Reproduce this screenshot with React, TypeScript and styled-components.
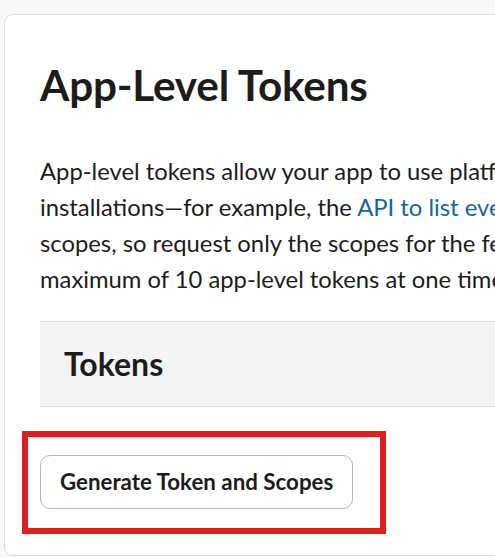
import React from "react";
import styled, { createGlobalStyle } from "styled-components";

const GlobalStyle = createGlobalStyle`
  html, body {
    margin: 0;
    padding: 0;
    background: #f8f8f8;
    overflow: hidden;
    font-family: Lato, "Noto Sans", sans-serif;
    color: #1d1c1d;
  }
  * {
    box-sizing: border-box;
  }
`;

const Page = styled.div`
  padding: 14px 0 0 4px;
  width: 1100px;
`;

const Card = styled.section`
  width: 1042px;
  height: 542px;
  background: #ffffff;
  border: 1px solid #dddddd;
  border-radius: 9px;
  padding: 45px 36px 20px 35px;
  display: flex;
  flex-direction: column;
`;

const Title = styled.h1`
  margin: 0;
  font-size: 42.3px;
  font-weight: 700;
  line-height: 1.2;
  letter-spacing: -0.2px;
`;

const Intro = styled.p`
  margin: 42px 0 0;
  font-size: 23.8px;
  line-height: 36px;
  width: 990px;
`;

const Link = styled.a`
  color: #1264a3;
  text-decoration: none;
`;

const SectionHead = styled.div`
  margin-top: 24px;
  height: 86px;
  display: flex;
  align-items: center;
  padding-left: 24px;
  background: #f4f4f4;
  border-top: 1px solid #dddddd;
  border-bottom: 1px solid #dddddd;
`;

const SectionTitle = styled.h2`
  margin: 0;
  font-size: 32px;
  font-weight: 700;
  line-height: 1.2;
`;

const Highlight = styled.div`
  align-self: flex-start;
  margin: 24px 0 0 -18px;
  border: 6px solid #de1f22;
  padding: 18px 27px 19px 12px;
`;

const Button = styled.button`
  height: 54px;
  padding: 0 19px;
  background: #ffffff;
  border: 1px solid #b5b5b5;
  border-radius: 10px;
  font-family: Lato, "Noto Sans", sans-serif;
  font-size: 22.3px;
  font-weight: 700;
  color: #1d1c1d;
  cursor: pointer;
`;

export default function App() {
  return (
    <Page>
      <GlobalStyle />
      <Card>
        <Title>App-Level Tokens</Title>
        <Intro>
          App-level tokens allow your app to use platform features that apply
          to multiple (or all) installations—for example, the{" "}
          <Link href="#">API to list event authorizations</Link>. Tokens can
          have one or more scopes, so request only the scopes for the features
          your app needs to use. You can have a maximum of 10 app-level tokens
          at one time.
        </Intro>
        <SectionHead>
          <SectionTitle>Tokens</SectionTitle>
        </SectionHead>
        <Highlight>
          <Button>Generate Token and Scopes</Button>
        </Highlight>
      </Card>
    </Page>
  );
}
